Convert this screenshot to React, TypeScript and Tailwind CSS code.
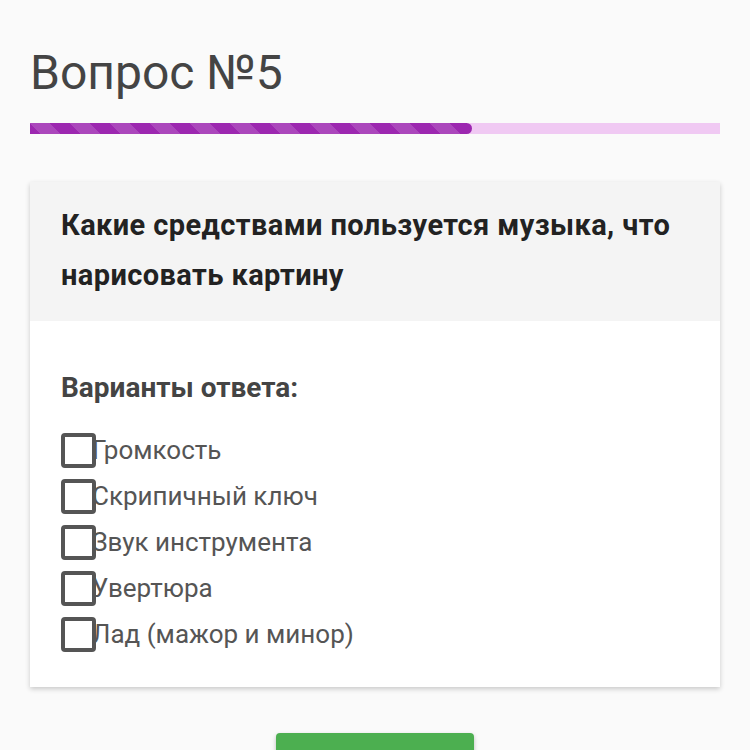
const options = [
  "Громкость",
  "Скрипичный ключ",
  "Звук инструмента",
  "Увертюра",
  "Лад (мажор и минор)",
];

export default function App() {
  return (
    <div className="min-h-[750px] bg-[#fafafa] px-[30px] pt-[45px] [font-family:Roboto,sans-serif]">
      <h1 className="text-[48px] leading-[56px] text-[#444]">Вопрос №5</h1>

      <div className="mt-[22px] h-[11px] w-full bg-[#f0c9f3]">
        <div className="h-full w-[442px] rounded-r-full bg-[#9c27b0] bg-[linear-gradient(45deg,rgba(255,255,255,0.15)_25%,transparent_25%,transparent_50%,rgba(255,255,255,0.15)_50%,rgba(255,255,255,0.15)_75%,transparent_75%,transparent)] bg-size-[40px_40px]" />
      </div>

      <div className="mt-[48px] bg-white shadow-[0_2px_5px_rgba(0,0,0,0.2)]">
        <div className="bg-[#f4f4f4] px-[31px] pt-[18px] pb-[21px] text-[29px] font-bold leading-[50px] tracking-[0.4px] text-[#222]">
          Какие средствами пользуется музыка, что нарисовать картину
        </div>
        <div className="px-[31px] pt-[52px] pb-[30px]">
          <div className="text-[28px] font-bold leading-[30px] text-[#444]">
            Варианты ответа:
          </div>
          <div className="mt-[24px] flex flex-col">
            {options.map((o) => (
              <label key={o} className="flex h-[46px] items-center">
                <span className="h-[35px] w-[35px] shrink-0 rounded-[4px] border-[4px] border-[#555]" />
                <span className="-ml-[4px] text-[26px] text-[#555]">{o}</span>
              </label>
            ))}
          </div>
        </div>
      </div>

      <div className="mt-[46px] flex justify-center">
        <button className="h-[60px] w-[198px] rounded-[4px] bg-[#4caf50] shadow-[0_2px_4px_rgba(0,0,0,0.25)]" />
      </div>
    </div>
  );
}
